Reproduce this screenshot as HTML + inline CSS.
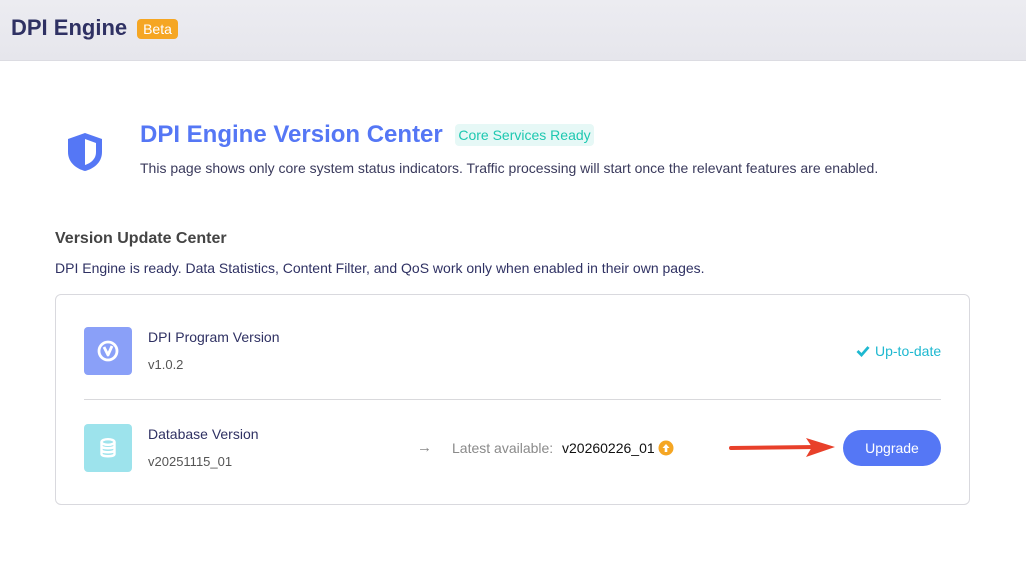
<!DOCTYPE html>
<html><head><meta charset="utf-8"><style>
*{margin:0;padding:0;box-sizing:border-box}
body{width:1026px;height:562px;background:#fff;font-family:"Liberation Sans",sans-serif;position:relative;overflow:hidden}
.a{position:absolute;white-space:nowrap}
</style></head><body>
<div class="a" style="left:0;top:0;width:1026px;height:61px;background:linear-gradient(#ececf1,#e6e6ec);border-bottom:1px solid #dcdce2"></div>
<div class="a" style="left:11px;top:15px;font-size:22px;font-weight:bold;color:#2f3163">DPI Engine</div>
<div class="a" style="left:137px;top:19px;width:41px;height:20px;background:#f5a623;border-radius:4px;color:#fff;font-size:14px;line-height:20px;text-align:center">Beta</div>

<svg class="a" style="left:66px;top:131px" width="38" height="42" viewBox="0 0 38 42"><path d="M19 2 L36 8 V21 C36 32 27 38 19 40 C11 38 2 32 2 21 V8 Z" fill="#5577f5"/><path d="M19 8 L30 12 V21 C30 28 25 32 19 34 Z" fill="#fff"/></svg>
<div class="a" style="left:140px;top:121px;font-size:24px;font-weight:bold;color:#5577f5">DPI Engine Version Center</div>
<div class="a" style="left:455px;top:124px;width:139px;height:22px;background:#e6f8f6;border-radius:4px;color:#1ec8b0;font-size:14px;line-height:22px;text-align:center">Core Services Ready</div>
<div class="a" style="left:140px;top:160px;font-size:14px;color:#3a3a5c">This page shows only core system status indicators. Traffic processing will start once the relevant features are enabled.</div>

<div class="a" style="left:55px;top:230px;font-size:16px;font-weight:bold;color:#444">Version Update Center</div>
<div class="a" style="left:55px;top:260px;font-size:14px;color:#2f3163">DPI Engine is ready. Data Statistics, Content Filter, and QoS work only when enabled in their own pages.</div>

<div class="a" style="left:55px;top:294px;width:915px;height:211px;border:1px solid #d9d9de;border-radius:6px"></div>
<div class="a" style="left:84px;top:327px;width:48px;height:48px;background:#8aa0f8;border-radius:4px"></div>
<svg class="a" style="left:96px;top:339px" width="24" height="24" viewBox="0 0 24 24"><circle cx="12" cy="12" r="9" fill="none" stroke="#fff" stroke-width="2.8"/><path d="M8 8 L12 16 L16 7" fill="none" stroke="#fff" stroke-width="2.8" stroke-linejoin="round"/></svg>
<div class="a" style="left:148px;top:329px;font-size:14px;color:#2f3163">DPI Program Version</div>
<div class="a" style="left:148px;top:357px;font-size:13px;color:#555">v1.0.2</div>
<svg class="a" style="left:856px;top:345px" width="14" height="12" viewBox="0 0 14 12"><path d="M1.5 6 L5.5 10 L12.5 2" fill="none" stroke="#1eb8d0" stroke-width="2.8"/></svg>
<div class="a" style="left:875px;top:343px;font-size:14px;color:#1eb8d0">Up-to-date</div>
<div class="a" style="left:84px;top:399px;width:857px;height:1px;background:#d9d9dc"></div>

<div class="a" style="left:84px;top:424px;width:48px;height:48px;background:#9de3ec;border-radius:4px"></div>
<svg class="a" style="left:96px;top:436px" width="24" height="24" viewBox="0 0 24 24" fill="none" stroke="#fff" stroke-width="2.4"><ellipse cx="12" cy="6" rx="6.5" ry="2.8"/><path d="M5.5 6 V18 C5.5 21 18.5 21 18.5 18 V6 M5.5 10 C5.5 13 18.5 13 18.5 10 M5.5 14 C5.5 17 18.5 17 18.5 14"/></svg>
<div class="a" style="left:148px;top:426px;font-size:14px;color:#2f3163">Database Version</div>
<div class="a" style="left:148px;top:454px;font-size:13px;color:#555">v20251115_01</div>
<div class="a" style="left:417px;top:439px;font-size:15px;color:#888">→</div>
<div class="a" style="left:452px;top:440px;font-size:14px;color:#8a8a8a">Latest available:</div>
<div class="a" style="left:562px;top:440px;font-size:14px;color:#111">v20260226_01</div>
<svg class="a" style="left:658px;top:440px" width="16" height="16" viewBox="0 0 16 16"><circle cx="8" cy="8" r="7.5" fill="#f5a623"/><path d="M8 4 L11.5 8 H9.3 V12 H6.7 V8 H4.5 Z" fill="#fff"/></svg>
<svg class="a" style="left:728px;top:436px" width="110" height="24" viewBox="0 0 110 24"><path d="M3 12 L88 11" stroke="#e8402a" stroke-width="4" stroke-linecap="round"/><path d="M78 2 L107 11 L78 21 L84 11 Z" fill="#e8402a"/></svg>
<div class="a" style="left:843px;top:430px;width:98px;height:36px;background:#5577f5;border-radius:18px;color:#fff;font-size:14px;line-height:36px;text-align:center">Upgrade</div>
</body></html>
